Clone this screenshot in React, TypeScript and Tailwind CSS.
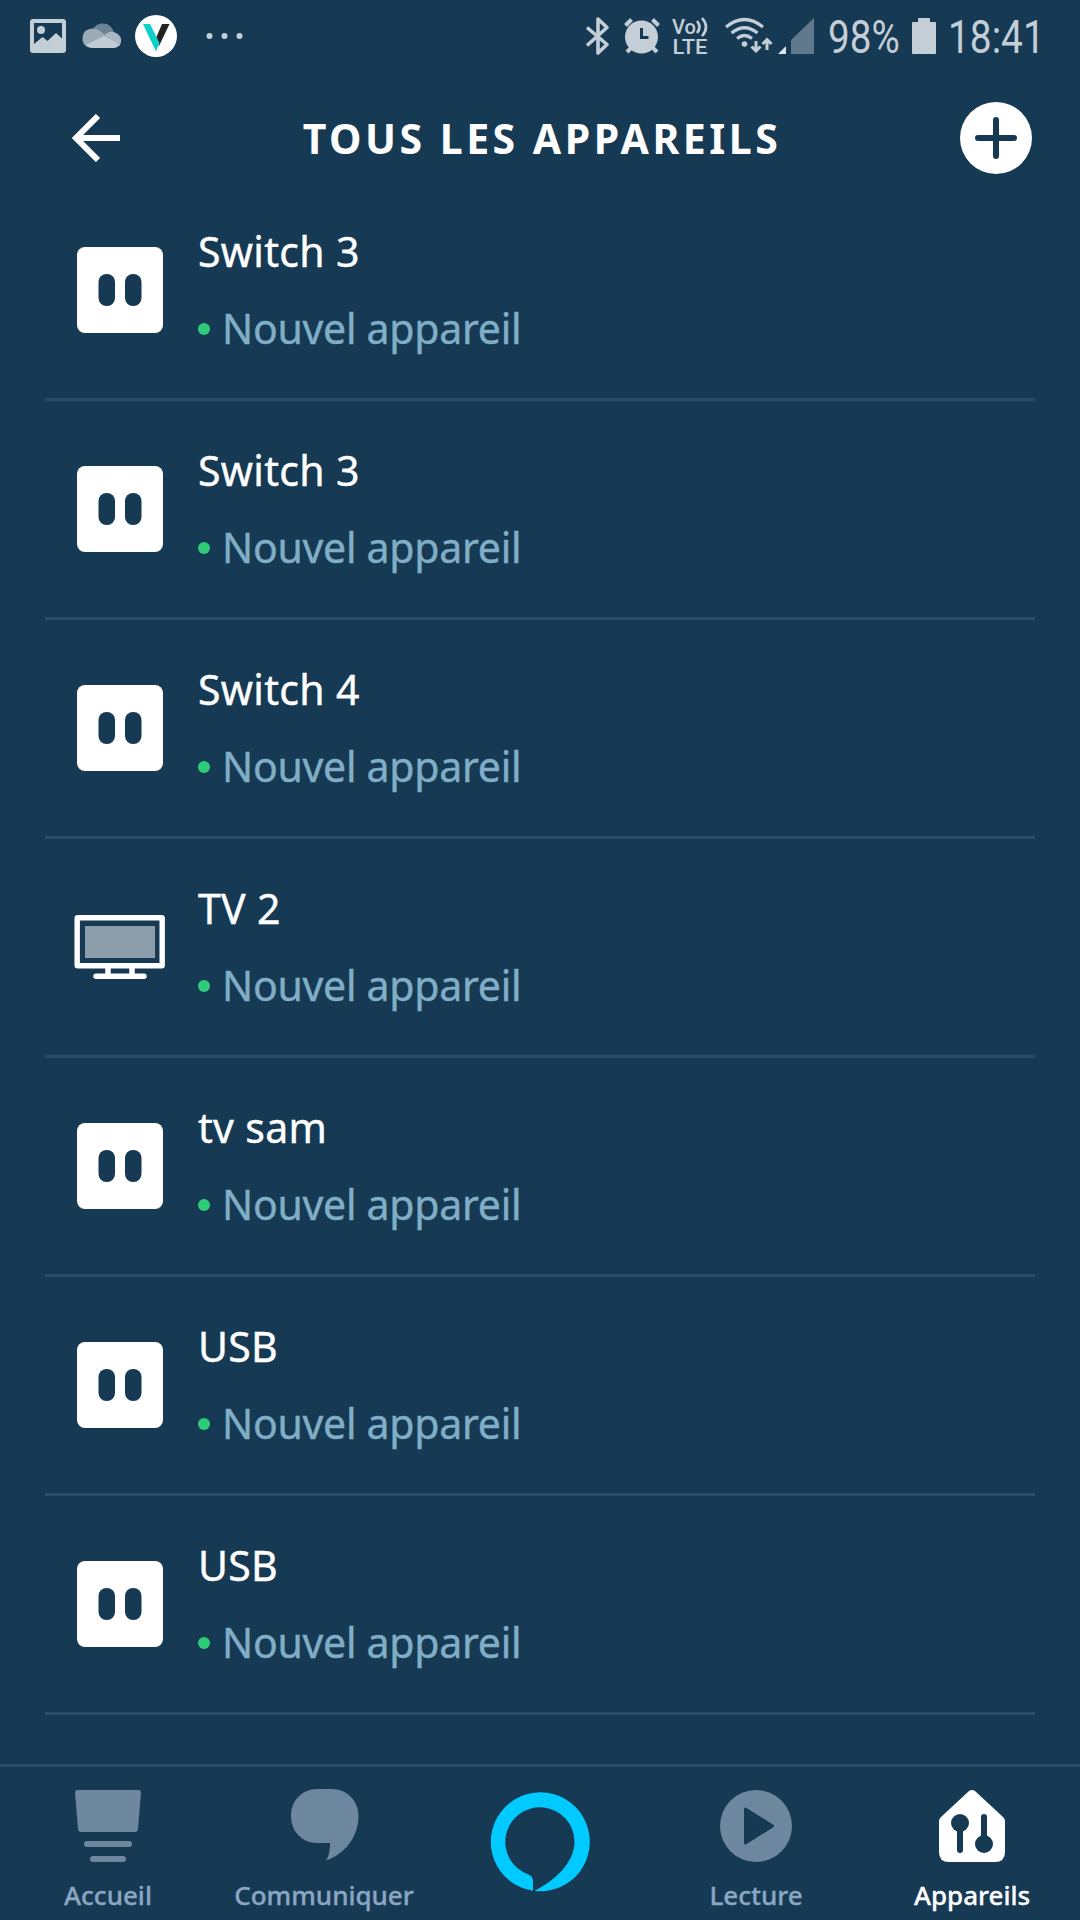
import type { ReactNode } from 'react';

type Device = { name: string; icon: 'plug' | 'tv' };

const devices: Device[] = [
  { name: 'Switch 3', icon: 'plug' },
  { name: 'Switch 3', icon: 'plug' },
  { name: 'Switch 4', icon: 'plug' },
  { name: 'TV 2', icon: 'tv' },
  { name: 'tv sam', icon: 'plug' },
  { name: 'USB', icon: 'plug' },
  { name: 'USB', icon: 'plug' },
];

function StatusBar() {
  return (
    <div className="flex h-[72px] items-center pl-[30px] text-[#c4ced6] font-['Roboto',sans-serif]">
      <svg width="36" height="34" viewBox="0 0 36 34" fill="currentColor">
        <path fillRule="evenodd" d="M3 0h30a3 3 0 0 1 3 3v28a3 3 0 0 1-3 3H3a3 3 0 0 1-3-3V3a3 3 0 0 1 3-3Zm1 4v21l8.500-7 5 4 8.500-8 6 5.500V4Z" />
        <circle cx="11" cy="11" r="4" />
      </svg>
      <svg className="ml-4" width="40" height="26" viewBox="0 0 40 26">
        <path d="M9 9C12 3 16 .5 21 .5c5 0 9 3 11 9l-10 3Z" fill="#6c8496" />
        <path d="M11 25C4 25 .5 21 .5 15.500.5 9 5 5.500 11 5.500c4 0 8 3 12 6.500L5 22Z" fill="#9babb8" />
        <path d="M22 12.500c4-4 8-4.500 12-2.500 4 2 5.500 5 5 9-.5 2-1 3-2 4Z" fill="#aab8c3" />
        <path d="m4 22 18-9.500L37.500 22c-1.500 2-3.500 3-6 3H11c-3 0-5-1-7-3Z" fill="#c0cbd4" />
      </svg>
      <svg className="ml-[13px]" width="42" height="42" viewBox="0 0 42 42">
        <circle cx="21" cy="21" r="21" fill="#fff" />
        <path d="M27 9h7.500L24 31l-3-8Z" fill="#222" />
        <path d="M8 9h7l9.500 19-3.500 8.500Z" fill="#0bcfc8" />
      </svg>
      <svg className="ml-[29px]" width="38" height="8" viewBox="0 0 38 8" fill="currentColor">
        <circle cx="3.500" cy="4" r="3" />
        <circle cx="18.500" cy="4" r="3" />
        <circle cx="33.500" cy="4" r="3" />
      </svg>

      <svg className="ml-[341px]" width="26" height="40" viewBox="0 0 26 40" fill="none" stroke="currentColor" strokeWidth="3.600" strokeLinejoin="round">
        <path d="m2 11.500 20 17-9 8.500V3l9 8.500-20 18" />
      </svg>
      <svg className="ml-[13px]" width="36" height="36" viewBox="0 0 36 36" fill="none" stroke="currentColor" strokeWidth="4">
        <path d="m1.500 7.500 6-6M34.500 7.500l-6-6M8 29l-5 5M28 29l5 5" />
        <circle cx="17.500" cy="19" r="16.500" fill="currentColor" stroke="none" />
        <path d="M17.500 10v9.500h7" stroke="#173a54" strokeWidth="3" />
      </svg>
      <svg className="ml-3 overflow-visible" width="40" height="40" viewBox="0 0 40 40" fill="currentColor">
        <text x="0" y="17.500" fontSize="20.500" fontWeight="500" textLength="24" lengthAdjust="spacingAndGlyphs">Vo</text>
        <path d="M25 5q5 6 0 12M30 2q8 9 0 18" fill="none" stroke="currentColor" strokeWidth="2.600" />
        <text x="0.500" y="37.500" fontSize="21" fontWeight="500" textLength="35" lengthAdjust="spacingAndGlyphs">LTE</text>
      </svg>
      <svg className="ml-3" width="50" height="40" viewBox="0 0 50 40" fill="none" stroke="currentColor" strokeWidth="3.200">
        <path d="M2 11q18.500-15 37 0M7.500 17q13-10.500 26 0M13 22.500q7.500-6 15 0" />
        <circle cx="20.500" cy="28" r="2.800" fill="currentColor" stroke="none" />
        <path d="M32 25v10m-4.500-4.500L32 35l4.500-4.500M43 34V23m-4.500 5 4.500-4.500 4.500 4.500" strokeWidth="3" />
      </svg>
      <svg className="ml-1" width="37" height="38" viewBox="0 0 37 38">
        <path d="M0 37 8 29v8Z" fill="#dde3e8" />
        <path d="M13 23 36 1v36H13Z" fill="#5f788b" />
      </svg>
      <span className="mt-px ml-[13px] block w-[84px] origin-left scale-x-[.84] whitespace-nowrap text-[46px] leading-[72px]">98%</span>
      <svg className="mr-[12px]" width="24" height="36" viewBox="0 0 24 36" fill="currentColor">
        <path d="M7 0h10a1 1 0 0 1 1 1v3h5a1 1 0 0 1 1 1v30a1 1 0 0 1-1 1H1a1 1 0 0 1-1-1V5a1 1 0 0 1 1-1h5V1a1 1 0 0 1 1-1Z" />
      </svg>
      <span className="mt-px block w-[90px] origin-left scale-x-[.845] whitespace-nowrap text-[46px] leading-[72px]">18:41</span>
    </div>
  );
}

function Header() {
  return (
    <header className="flex h-[110px] items-start justify-between pl-[72px] pr-12 pt-[30px]">
      <svg className="mt-3 mr-1" width="48" height="48" viewBox="0 0 48 48" fill="none" stroke="#fff" strokeWidth="6">
        <path d="M26 2 4 24l22 22M4 24h44" />
      </svg>
      <h1 className="whitespace-nowrap text-[41px] font-bold leading-[72px] tracking-[3.5px] text-white">TOUS LES APPAREILS</h1>
      <svg width="72" height="72" viewBox="0 0 72 72">
        <circle cx="36" cy="36" r="36" fill="#fff" />
        <path d="M36 18v36M18 36h36" stroke="#173a54" strokeWidth="6" strokeLinecap="round" />
      </svg>
    </header>
  );
}

function PlugIcon() {
  return (
    <svg width="92" height="86" viewBox="0 0 92 86">
      <rect x="3" width="86" height="86" rx="8" fill="#fff" />
      <rect x="24.500" y="27" width="16.500" height="32" rx="8" fill="#173a54" />
      <rect x="51" y="27" width="16.500" height="32" rx="8" fill="#173a54" />
    </svg>
  );
}

function TvIcon() {
  return (
    <svg width="92" height="86" viewBox="0 0 92 86">
      <rect x="3.200" y="13.700" width="85" height="48" rx="0.500" fill="none" stroke="#fff" strokeWidth="5.400" />
      <rect x="11" y="22" width="70" height="32" fill="#8c9eac" />
      <path d="M34 63v8M58 63v8" stroke="#fff" strokeWidth="5.500" />
      <path d="M22 72.300h48" stroke="#fff" strokeWidth="5.400" strokeLinecap="round" />
    </svg>
  );
}

function DeviceRow({ device }: { device: Device }) {
  return (
    <li className="flex h-[219px] border-b-[3px] border-[#2c4d66] pl-[29px]">
      <div className="mt-[65px]">{device.icon === 'tv' ? <TvIcon /> : <PlugIcon />}</div>
      <div className="ml-8 flex flex-col gap-[17px] pt-[39px] text-[41px] leading-[60px] [-webkit-text-stroke:0.4px]">
        <span className="tracking-[0.3px] text-white">{device.name}</span>
        <span className="flex items-center tracking-[-0.27px] text-[#80aec6]">
          <span className="mt-px mr-3 size-3 rounded-full bg-[#2ecc78]" />
          Nouvel appareil
        </span>
      </div>
    </li>
  );
}

function NavItem({ label, active, children }: { label: string; active?: boolean; children: ReactNode }) {
  return (
    <a className={active ? 'flex w-[216px] flex-col items-center pt-[20px] text-white' : 'flex w-[216px] flex-col items-center pt-[20px] text-[#8aa6c3]'}>
      {children}
      <span className="mt-3 text-[26px] font-medium leading-[36px] [-webkit-text-stroke:0.3px]">{label}</span>
    </a>
  );
}

function BottomNav() {
  return (
    <nav className="mt-auto flex h-[156px] border-t-[3px] border-[#2c4d66]">
      <NavItem label="Accueil">
        <svg width="72" height="78" viewBox="0 0 72 78" fill="#6c879e">
          <path d="M5 3h62q2 0 2 2.500L66 42q-.3 3-3 3H9q-2.700 0-3-3L3 5.500Q3 3 5 3Z" />
          <rect x="12" y="54" width="48" height="6" rx="3" />
          <rect x="18" y="69" width="36" height="6" rx="3" />
        </svg>
      </NavItem>
      <NavItem label="Communiquer">
        <svg width="72" height="78" viewBox="0 0 72 78" fill="#6c879e">
          <path d="M29 2h15C59 2 70.500 14 70.500 29c0 20-13 38-32.500 44.500 3-4.500 4-9.500 4-17.500H29C14 56 3 44 3 29S14 2 29 2Z" />
        </svg>
      </NavItem>
      <a className="flex w-[216px] justify-center pt-[25px]">
        <svg width="100" height="100" viewBox="0 0 100 100" fill="#00caff">
          <path d="M43 98.800A49.500 49.500 0 1 1 44.500 99C65 88 84.500 71 84.500 49.500A34.600 34.600 0 1 0 38.500 82.500Q43 84.500 43 89Z" />
        </svg>
      </a>
      <NavItem label="Lecture">
        <svg width="72" height="78" viewBox="0 0 72 78">
          <circle cx="36" cy="39" r="36" fill="#6c879e" />
          <path d="m25.500 22 27 17-27 17Z" fill="#173a54" stroke="#173a54" strokeWidth="3" strokeLinejoin="round" />
        </svg>
      </NavItem>
      <NavItem label="Appareils" active>
        <svg width="72" height="78" viewBox="0 0 72 78">
          <path d="M33 4q3-2 6 0l28 26q2 2 2 4v31q0 10-10 10H13Q3 75 3 65V34q0-2 2-4Z" fill="#fff" />
          <g fill="#173a54" stroke="#173a54" strokeWidth="6" strokeLinecap="round">
            <path d="M24 40v23M48 30v23" />
            <circle cx="24" cy="36" r="9" stroke="none" />
            <circle cx="48" cy="57" r="9" stroke="none" />
          </g>
        </svg>
      </NavItem>
    </nav>
  );
}

export default function App() {
  return (
    <div className="flex h-[1920px] w-[1080px] flex-col overflow-hidden bg-[#173a54] font-['Noto_Sans','Open_Sans',sans-serif]">
      <StatusBar />
      <Header />
      <ul className="mx-[45px]">
        {devices.map((device, i) => (
          <DeviceRow key={i} device={device} />
        ))}
      </ul>
      <BottomNav />
    </div>
  );
}
